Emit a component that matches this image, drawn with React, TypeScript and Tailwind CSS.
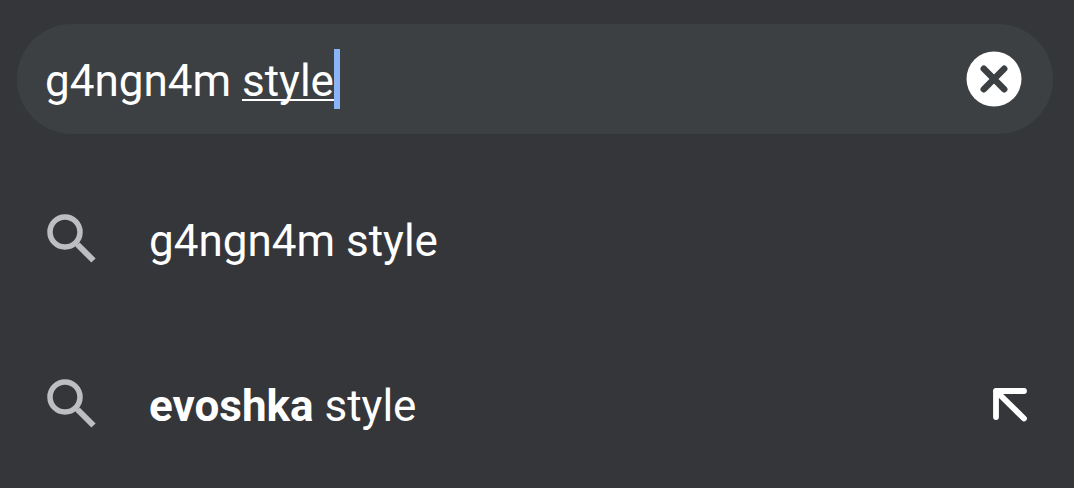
import { useState } from "react";

const suggestions = [
  { match: "", rest: "g4ngn4m style", canFill: false },
  { match: "evoshka", rest: " style", canFill: true },
];

function SearchIcon() {
  return (
    <svg viewBox="0 0 50 50" className="mb-1 size-[50px] shrink-0" fill="none" stroke="#bdbec1" aria-hidden="true">
      <circle cx="18" cy="18" r="15" strokeWidth="5.5" />
      <path d="M30.5 30.5 L46.5 46.5" strokeWidth="6" />
      <path d="M27.5 29 L32 33.5" strokeWidth="3" />
    </svg>
  );
}

function ClearIcon() {
  return (
    <svg viewBox="0 0 56 56" className="size-14" aria-hidden="true">
      <circle cx="28" cy="28" r="27.5" fill="#fff" />
      <path d="M17.8 17.8 L38.2 38.2 M38.2 17.8 L17.8 38.2" stroke="#3c4043" strokeWidth="6.5" strokeLinecap="round" />
    </svg>
  );
}

function FillIcon() {
  return (
    <svg viewBox="0 0 36 36" className="mb-0.5 size-9" fill="none" stroke="#fff" strokeWidth="5.8" strokeLinecap="round" strokeLinejoin="round" aria-hidden="true">
      <path d="M32 4 H4 V30 M4 4 L32 31.5" />
    </svg>
  );
}

export default function App() {
  const [query, setQuery] = useState("g4ngn4m style");
  const lastSpace = query.lastIndexOf(" ") + 1;

  return (
    <main className="min-h-screen bg-[#35363a] pt-6 font-[Roboto,sans-serif] text-[44px] leading-[60px] text-white">
      <form
        role="search"
        onSubmit={(e) => e.preventDefault()}
        className="mr-[21px] mb-6 ml-[17px] flex h-[110px] items-center rounded-full bg-[#3c4043] pr-[31px] pl-7"
      >
        <div className="relative min-w-0 flex-1">
          <input
            type="text"
            aria-label="Search"
            value={query}
            onChange={(e) => setQuery(e.target.value)}
            className="block h-[60px] w-full bg-transparent pt-1 caret-transparent outline-none"
          />
          {/* Composing underline and caret, drawn over the field */}
          <div aria-hidden="true" className="pointer-events-none absolute inset-0 flex overflow-hidden whitespace-pre text-transparent">
            <span>{query.slice(0, lastSpace)}</span>
            <span className="underline decoration-white decoration-2 underline-offset-[5px] [text-decoration-skip-ink:none]">
              {query.slice(lastSpace)}
            </span>
            <span className="h-[60px] w-1.5 bg-[#8ab4f8]" />
          </div>
        </div>
        <button type="button" aria-label="Clear search" onClick={() => setQuery("")} className="shrink-0">
          <ClearIcon />
        </button>
      </form>

      <ul>
        {suggestions.map((item) => (
          <li key={item.match + item.rest} className="flex h-[165px] items-center pr-[46px] pl-[47px]">
            <button
              type="button"
              onClick={() => setQuery(item.match + item.rest)}
              className="flex min-w-0 flex-1 items-center gap-[52px] text-left"
            >
              <SearchIcon />
              <span className="truncate whitespace-pre">
                {item.match && <b className="font-bold">{item.match}</b>}
                {item.rest}
              </span>
            </button>
            {item.canFill && (
              <button
                type="button"
                aria-label="Use this suggestion"
                onClick={() => setQuery(item.match + item.rest)}
                className="shrink-0"
              >
                <FillIcon />
              </button>
            )}
          </li>
        ))}
      </ul>
    </main>
  );
}
